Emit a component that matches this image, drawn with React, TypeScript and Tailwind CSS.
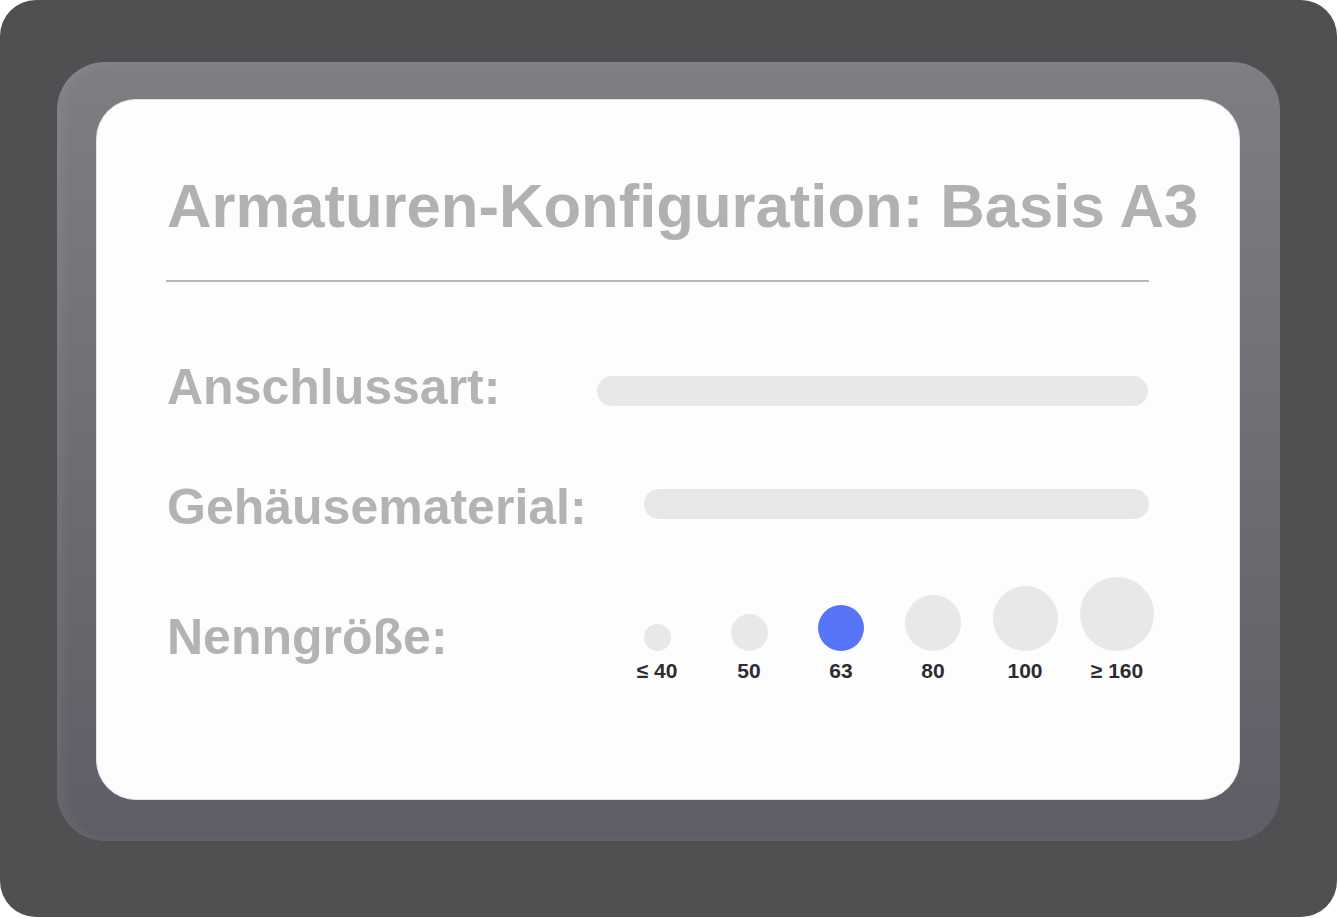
const sizes = [
  { label: '≤ 40', d: 27 },
  { label: '50', d: 37 },
  { label: '63', d: 46, active: true },
  { label: '80', d: 56 },
  { label: '100', d: 65 },
  { label: '≥ 160', d: 74 },
];

const font = { fontFamily: '"Liberation Sans", Arial, sans-serif' };

export default function App() {
  return (
    <div className="h-[918px] w-[1338px] bg-white" style={font}>
      <div className="h-[917px] w-[1337px] rounded-[36px] bg-[#514f52] pl-[57px] pt-[62px]">
        <div className="h-[779px] w-[1223px] rounded-[48px] bg-gradient-to-b from-[#807e82] to-[#5f5d65] pl-[39px] pt-[37px] shadow-[inset_6px_0_10px_rgba(255,255,255,0.06)]">
          <div className="h-[701px] w-[1144px] rounded-[40px] border-[1.5px] border-[#e4e2e8] bg-[#fdfdfe] pl-[70px] pt-[75px]">
            <h1 className="whitespace-nowrap text-[61.6px] font-bold leading-none text-[#b1b0b3]">
              Armaturen-Konfiguration: Basis A3
            </h1>
            <div className="ml-[-1px] mt-[43px] h-[2px] w-[983px] bg-[#b7b6b9]" />

            <div className="mt-[80px] flex h-[50px] items-start">
              <div className="w-[430px] shrink-0 text-[50px] font-bold leading-none text-[#b3b2b5]">
                Anschlussart:
              </div>
              <div className="mt-[14px] h-[30px] w-[551px] rounded-full bg-[#e9e7ea]" />
            </div>

            <div className="mt-[70px] flex h-[50px] items-start">
              <div className="w-[477px] shrink-0 text-[50px] font-bold leading-none text-[#b3b2b5]">
                Gehäusematerial:
              </div>
              <div className="mt-[7px] h-[30px] w-[505px] rounded-full bg-[#e9e7ea]" />
            </div>

            <div className="mt-[45px] flex items-start">
              <div className="mt-[35px] w-[444px] shrink-0 text-[50px] font-bold leading-none text-[#b3b2b5]">
                Nenngröße:
              </div>
              <div className="flex">
                {sizes.map((s) => (
                  <div key={s.label} className="flex w-[92px] flex-col items-center">
                    <div className="flex h-[74px] items-end">
                      <div
                        className={s.active ? 'rounded-full bg-[#5874f8]' : 'rounded-full bg-[#e9e7ea]'}
                        style={{ width: s.d, height: s.d }}
                      />
                    </div>
                    <div className="mt-[9px] whitespace-nowrap text-[21px] font-bold leading-none text-[#2d2c31]">
                      {s.label}
                    </div>
                  </div>
                ))}
              </div>
            </div>
          </div>
        </div>
      </div>
    </div>
  );
}
